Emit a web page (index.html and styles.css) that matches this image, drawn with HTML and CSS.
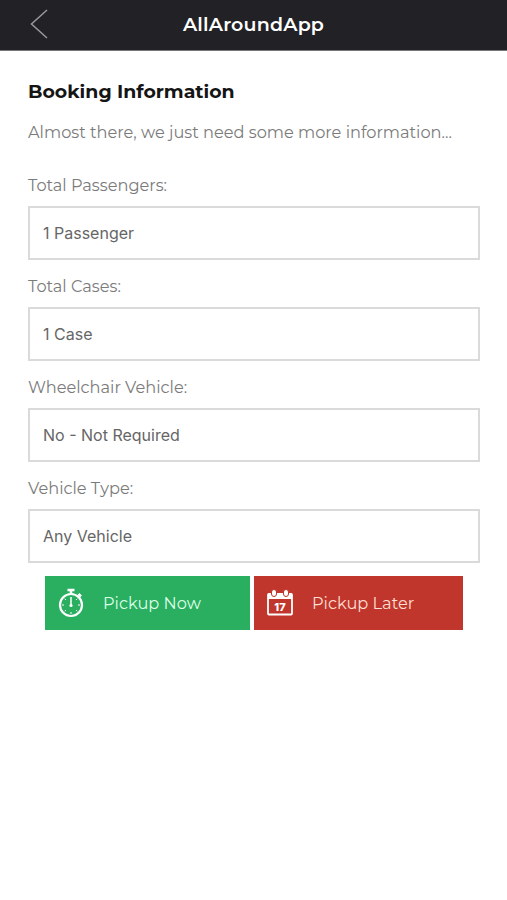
FILE: index.html
```html
<!DOCTYPE html>
<html lang="en">
<head>
<meta charset="utf-8">
<meta name="viewport" content="width=device-width">
<title>AllAroundApp</title>
<link rel="stylesheet" href="styles.css">
</head>
<body>
<header class="bar">
  <button class="back" aria-label="Back">
    <svg width="20" height="32" viewBox="0 0 20 32"><path d="M18 2 2.500 16l15.500 14" fill="none" stroke="currentColor" stroke-width="1.500"/></svg>
  </button>
  <h1 class="title">AllAroundApp</h1>
</header>
<main class="content">
  <h2 class="heading">Booking Information</h2>
  <p class="intro">Almost there, we just need some more information...</p>
  <div class="field"><span class="label">Total Passengers:</span><div class="box">1 Passenger</div></div>
  <div class="field"><span class="label">Total Cases:</span><div class="box">1 Case</div></div>
  <div class="field"><span class="label">Wheelchair Vehicle:</span><div class="box">No - Not Required</div></div>
  <div class="field"><span class="label">Vehicle Type:</span><div class="box">Any Vehicle</div></div>
  <div class="actions">
    <button class="action now">
      <svg class="icon" width="28" height="30" viewBox="0 0 28 30" fill="none" stroke="currentColor">
        <circle cx="14" cy="17" r="11" stroke-width="2.200"/>
        <path d="M10.500 2h7M14 2v4" stroke-width="2.500"/>
        <path d="m21.500 6 2.500 2.500" stroke-width="2.500"/>
        <path d="M14 9v8" stroke-width="1.500"/>
        <circle cx="14" cy="17.500" r="1.600" fill="currentColor" stroke="none"/>
        <path d="M5 17h2M21 17h2M14 24v2M7.700 10.700l1.200 1.200M20.300 10.700l-1.200 1.200M7.700 23.300l1.200-1.200M20.300 23.300l-1.200-1.200" stroke-width="1"/>
      </svg>
      <span>Pickup Now</span>
    </button>
    <button class="action later">
      <svg class="icon" width="28" height="30" viewBox="0 0 28 30" fill="none" stroke="currentColor">
        <rect x="2" y="6" width="24" height="20.500" rx="1" stroke-width="1.800"/>
        <path d="M2 5.500h24V11H2z" fill="currentColor" stroke="none"/>
        <rect class="ring" x="5.500" y="1.500" width="5" height="7" rx="2.500"/>
        <rect class="ring" x="17.500" y="1.500" width="5" height="7" rx="2.500"/>
        <text class="day" x="14" y="22.500" text-anchor="middle">17</text>
      </svg>
      <span>Pickup Later</span>
    </button>
  </div>
</main>
</body>
</html>
```
FILE: styles.css
```css
* { box-sizing: border-box; }
body { margin: 0; min-height: 900px; background: #fff; font-family: Montserrat, Inter, sans-serif; color: #7b7b7b; }
button { border: 0; padding: 0; background: none; font: inherit; }
.bar { height: 51px; display: grid; grid-template-columns: 60px 1fr 60px; align-items: center; background: #222226; border-bottom: 1px solid #77777a; }
.back { height: 32px; padding-left: 29px; margin-top: -3px; color: #99999c; display: flex; }
.title { margin: 0; text-align: center; color: #fff; font-size: 19px; line-height: 24px; font-weight: 600; margin-top: -1px; letter-spacing: .2px; }
.content { padding: 29px 27px 0 28px; }
.heading { margin: 0; font-size: 18.900px; line-height: 24px; font-weight: 700; color: #151515; white-space: nowrap; }
.intro { margin: 16px 0 30px; height: 24px; font-size: 16.200px; line-height: 24px; white-space: nowrap; }
.field { height: 101.100px; }
.label { display: block; height: 32px; line-height: 23px; font-size: 16.200px; white-space: nowrap; }
.box { height: 54px; border: 2px solid #dadada; padding: 0 13px; line-height: 51px; font-family: Inter, sans-serif; font-size: 16px; color: #666; white-space: nowrap; }
.actions { display: flex; gap: 4px; padding-left: 17px; margin-top: -2px; }
.action { height: 54px; display: flex; align-items: center; padding-bottom: 1px; font-size: 16.200px; white-space: nowrap; }
.now { width: 205px; padding-left: 12px; gap: 18px; background: #2aae60; color: #dcffe7; }
.later { width: 209px; padding-left: 12px; gap: 18px; background: #c0362c; color: #ffded2; }
.icon { flex: none; color: #fff; }
.ring { fill: #fff; stroke: #c0362c; stroke-width: 1px; }
.day { fill: #fff; stroke: none; font: 800 11px Inter, sans-serif; }
```
